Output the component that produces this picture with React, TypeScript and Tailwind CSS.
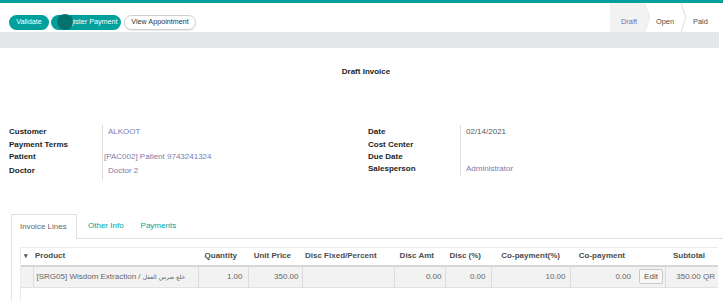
// Draft invoice form view

import type { ReactNode } from 'react'

const leftFields: { label: string; value: string; h: string; pl?: string }[] = [
  { label: 'Customer', value: 'ALKOOT', h: 'h-[13px]' },
  { label: 'Payment Terms', value: '', h: 'h-[14px]' },
  { label: 'Patient', value: '[PAC002] Patient 9743241324', h: 'h-[10px]', pl: 'pl-[1px]' },
  { label: 'Doctor', value: 'Doctor 2', h: 'h-[18px]' },
]

const rightFields: { label: string; value: string; h: string; muted?: boolean }[] = [
  { label: 'Date', value: '02/14/2021', h: 'h-[13px]', muted: true },
  { label: 'Cost Center', value: '', h: 'h-[14px]' },
  { label: 'Due Date', value: '', h: 'h-[10px]' },
  { label: 'Salesperson', value: 'Administrator', h: 'h-[14px]' },
]

function Chevron() {
  return (
    <svg
      className="absolute right-0 top-0 h-full w-[5px]"
      viewBox="0 0 5 29"
      preserveAspectRatio="none"
    >
      <polyline points="0,0 5,14.5 0,29" fill="none" stroke="#dcdcdc" strokeWidth="1" />
    </svg>
  )
}

function Th({ children, className = '' }: { children?: ReactNode; className?: string }) {
  return <th className={`font-bold text-[#4c4c4c] ${className}`}>{children}</th>
}

export default function App() {
  return (
    <div className="w-[723px] h-[301px] overflow-hidden bg-white font-['Liberation_Sans',Arial,sans-serif] text-[8px] text-[#212529]">
      <div className="h-[3px] bg-[#00a09d]" />

      {/* status bar */}
      <div className="h-[29px] flex justify-between">
        <div className="flex items-end gap-[2px] pl-[9px] pb-[2px] text-[7.2px]">
          <button className="h-[15px] w-[40px] rounded-full bg-[#00a09d] text-white">
            Validate
          </button>
          <button className="relative h-[15px] w-[70px] rounded-full bg-[#00a09d] text-white overflow-visible">
            <span className="relative pl-[6px]">Register Payment</span>
            {/* click ripple */}
            <span className="absolute left-[6px] top-[-1px] h-[16px] w-[16px] rounded-full bg-[#006f6a] opacity-95" />
          </button>
          <button className="h-[15px] w-[72px] ml-[1px] rounded-full border border-[#cfcfcf] bg-white text-[#333] shadow-[0_1px_1px_rgba(0,0,0,0.08)]">
            View Appointment
          </button>
        </div>
        <div className="flex text-[7.4px] text-[#4c4c4c]">
          <div className="relative w-[40px] bg-[#f2f2f2] [clip-path:polygon(0_0,calc(100%-5px)_0,100%_50%,calc(100%-5px)_100%,0_100%)] flex items-center pl-[11px] pt-[9px] text-[#6e6db0]">
            Draft
            <Chevron />
          </div>
          <div className="relative w-[36px] flex items-center pl-[6px] pt-[9px]">
            Open
            <Chevron />
          </div>
          <div className="w-[37px] flex items-center pl-[7px] pt-[9px]">Paid</div>
        </div>
      </div>

      <div className="h-[16px] bg-[#e4e7e7] mr-[4px]" />

      {/* sheet */}
      <div className="pl-[9px] pt-[19px] text-center font-bold leading-[10px]">
        Draft Invoice
      </div>

      <div className="flex mt-[48px] leading-[10px]">
        <div className="w-[368px] pl-[9px]">
          {leftFields.map((f) => (
            <div key={f.label} className={`flex ${f.h}`}>
              <div className="w-[93px] font-bold flex items-center">{f.label}</div>
              <div
                className={`flex-1 border-l border-[#dedede] flex items-center ${f.pl ?? 'pl-[5px]'} text-[#7c7bad]`}
              >
                {f.value}
              </div>
            </div>
          ))}
        </div>
        <div className="flex-1">
          {rightFields.map((f) => (
            <div key={f.label} className={`flex ${f.h}`}>
              <div className="w-[92px] font-bold flex items-center">{f.label}</div>
              <div
                className={`flex-1 border-l border-[#dedede] flex items-center pl-[5px] ${
                  f.muted ? 'text-[#555]' : 'text-[#7c7bad]'
                }`}
              >
                {f.value}
              </div>
            </div>
          ))}
        </div>
      </div>

      {/* notebook */}
      <div className="ml-[11px] mt-[34px] border-l border-[#e6e6e6] h-[100px]">
        <div className="flex h-[25px] border-b border-[#dedede]">
          <div className="w-[65px] h-[25px] border-t border-r border-[#dedede] bg-white pl-[8px] flex items-center text-[#666]">
            Invoice Lines
          </div>
          <div className="flex items-center pl-[11px] text-[#00a09d]">Other Info</div>
          <div className="flex items-center pl-[17px] text-[#00a09d]">Payments</div>
        </div>

        <div className="ml-[8px] mt-[8px] w-[697px] border-l border-[#ececec] h-[60px]">
          <table className="table-fixed w-[697px] border-collapse">
            <colgroup>
              <col className="w-[12px]" />
              <col className="w-[165px]" />
              <col className="w-[50px]" />
              <col className="w-[54px]" />
              <col className="w-[92px]" />
              <col className="w-[51px]" />
              <col className="w-[46px]" />
              <col className="w-[79px]" />
              <col className="w-[65px]" />
              <col className="w-[30px]" />
              <col className="w-[53px]" />
            </colgroup>
            <thead>
              <tr className="h-[18px] border-t border-[#ececec] border-b-2 border-b-[#d6d6d6]">
                <Th className="text-left pl-[3px] text-[7px] text-[#555]">▾</Th>
                <Th className="text-left pl-[2px]">Product</Th>
                <Th className="text-right pr-[11px]">Quantity</Th>
                <Th className="text-right pr-[11px]">Unit Price</Th>
                <Th className="text-left pl-[3px] whitespace-nowrap">Disc Fixed/Percent</Th>
                <Th className="text-right pr-[11px]">Disc Amt</Th>
                <Th className="text-right pr-[10px]">Disc (%)</Th>
                <Th className="text-right pr-[10px]">Co-payment(%)</Th>
                <Th className="text-right pr-[10px]">Co-payment</Th>
                <Th />
                <Th className="text-right pr-[13px]">Subtotal</Th>
              </tr>
            </thead>
            <tbody className="text-[#666]">
              <tr className="h-[22px] bg-[#f2f2f2] border-b border-[#e2e2e2]">
                <td className="border-r border-[#dcdcdc]" />
                <td className="border-r border-[#dcdcdc] pl-[3px] whitespace-nowrap overflow-hidden">
                  [SRG05] Wisdom Extraction / <span className="font-['DejaVu_Sans',sans-serif] text-[6px]">خلع ضرس العقل</span>
                </td>
                <td className="border-r border-[#dcdcdc] text-right pr-[5px]">1.00</td>
                <td className="border-r border-[#dcdcdc] text-right pr-[3px]">350.00</td>
                <td className="border-r border-[#dcdcdc]" />
                <td className="border-r border-[#dcdcdc] text-right pr-[3px]">0.00</td>
                <td className="border-r border-[#dcdcdc] text-right pr-[5px]">0.00</td>
                <td className="border-r border-[#dcdcdc] text-right pr-[4px]">10.00</td>
                <td className="text-right pr-[4px]">0.00</td>
                <td className="border-r border-[#dcdcdc] pl-[4px]">
                  <div className="h-[15px] w-[24px] rounded-[2px] border border-[#c8c8c8] bg-[#f7f7f7] flex items-center justify-center text-[#555]">
                    Edit
                  </div>
                </td>
                <td className="text-right pr-[3px] whitespace-nowrap">350.00 QR</td>
              </tr>
            </tbody>
          </table>
        </div>
      </div>
    </div>
  )
}
